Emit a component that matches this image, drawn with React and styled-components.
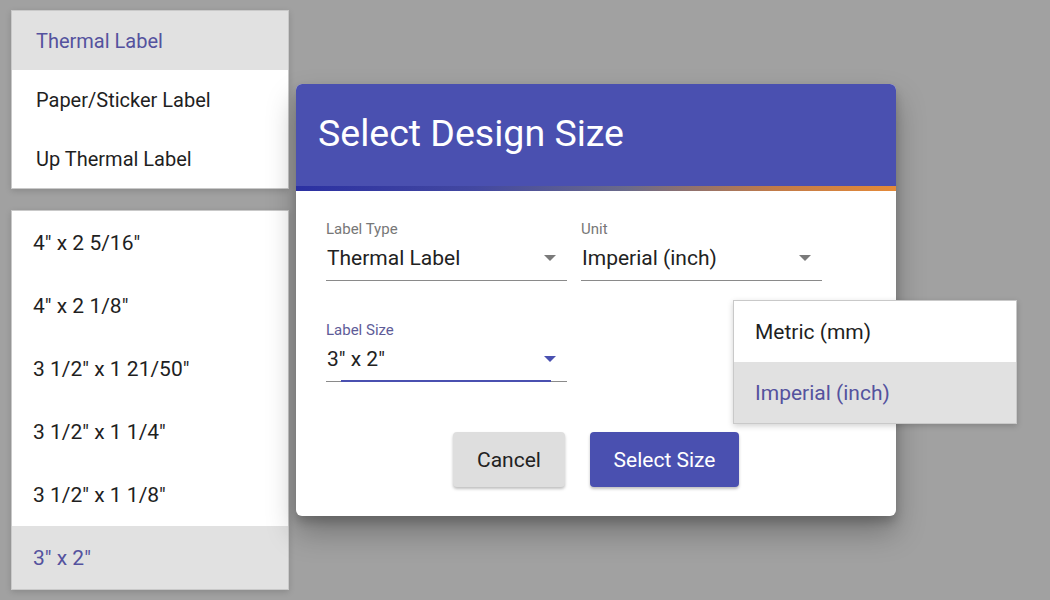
import React from 'react'
import styled, { createGlobalStyle } from 'styled-components'

const GlobalStyle = createGlobalStyle`
  html, body {
    margin: 0;
    padding: 0;
    background: #a1a1a1;
    font-family: Roboto, "Liberation Sans", Arial, sans-serif;
  }
`

const Backdrop = styled.div`
  width: 1050px;
  height: 600px;
  overflow: hidden;
  background: #a1a1a1;
  display: flex;
  align-items: flex-start;
  padding: 10px 0 0 11px;
  box-sizing: border-box;
`

const MenuColumn = styled.div`
  display: flex;
  flex-direction: column;
  gap: 21px;
  width: 278px;
  flex-shrink: 0;
`

const Menu = styled.ul`
  list-style: none;
  margin: 0;
  padding: 0;
  background: #fff;
  border: 1px solid #c9c9c9;
  box-shadow: 0 2px 6px rgba(0, 0, 0, 0.15);
  width: ${props => props.width || '278px'};
  box-sizing: border-box;
`

const MenuItem = styled.li`
  height: ${props => props.h}px;
  display: flex;
  align-items: center;
  padding-left: ${props => props.pad}px;
  font-size: ${props => props.size || 21}px;
  color: ${props => (props.selected ? '#54529e' : '#1f1f1f')};
  background: ${props => (props.selected ? '#e1e1e1' : '#fff')};
`

const Dialog = styled.div`
  width: 600px;
  margin: 74px 0 0 7px;
  background: #fff;
  border-radius: 6px;
  position: relative;
  box-shadow: 0 16px 30px rgba(0, 0, 0, 0.28), 0 6px 10px rgba(0, 0, 0, 0.18);
`

const Header = styled.div`
  background: #4a50b0;
  border-radius: 6px 6px 0 0;
  height: 102px;
  display: flex;
  align-items: center;
  padding-left: 22px;
  color: #fff;
  font-size: 37.5px;
  padding-bottom: 4px;
  box-sizing: border-box;
`

const Stripe = styled.div`
  height: 5px;
  background: linear-gradient(90deg, #2b30a2 0%, #4348a0 30%, #6a6a8a 55%, #c27b48 80%, #e58a38 100%);
`

const Body = styled.div`
  padding: 30px 30px 29px 30px;
`

const FieldRow = styled.div`
  display: flex;
  gap: 14px;
  margin-bottom: ${props => props.mb || 0}px;
`

const Field = styled.div`
  width: 241px;
  position: relative;
`

const FieldLabel = styled.div`
  font-size: 15px;
  line-height: 16px;
  color: ${props => (props.focused ? '#5e5c98' : '#777')};
`

const ValueLine = styled.div`
  display: flex;
  align-items: center;
  justify-content: space-between;
  height: 28px;
  margin-top: 7px;
  padding: 0 11px 8px 1px;
  font-size: 21px;
  color: #222;
  border-bottom: 1px solid #8a8a8a;
  position: relative;
`

const FocusBar = styled.div`
  position: absolute;
  left: 15px;
  right: 16px;
  bottom: -1px;
  height: 2px;
  background: #4a50b0;
`

const Caret = styled.span`
  width: 0;
  height: 0;
  border-left: 6px solid transparent;
  border-right: 6px solid transparent;
  border-top: 6px solid ${props => (props.focused ? '#4a50b0' : '#7a7a7a')};
`

const Actions = styled.div`
  display: flex;
  justify-content: center;
  gap: 25px;
`

const Button = styled.button`
  height: 55px;
  width: ${props => props.w}px;
  border: none;
  border-radius: 4px;
  font-family: inherit;
  font-size: 21px;
  color: ${props => (props.primary ? '#fff' : '#222')};
  background: ${props => (props.primary ? '#4a50b0' : '#dedede')};
  box-shadow: 0 2px 3px rgba(0, 0, 0, 0.25);
`

const UnitMenu = styled(Menu)`
  position: absolute;
  left: 437px;
  top: 216px;
  box-shadow: 0 2px 6px rgba(0, 0, 0, 0.18);
`

const labelTypes = ['Thermal Label', 'Paper/Sticker Label', 'Up Thermal Label']
const sizes = ['4" x 2 5/16"', '4" x 2 1/8"', '3 1/2" x 1 21/50"', '3 1/2" x 1 1/4"', '3 1/2" x 1 1/8"', '3" x 2"']
const units = ['Metric (mm)', 'Imperial (inch)']

const App = () => {
  return (
    <>
      <GlobalStyle />
      <Backdrop>
        <MenuColumn>
          <Menu>
            {labelTypes.map((t, i) => (
              <MenuItem key={t} h={59} pad={24} size={20} selected={i === 0}>
                {t}
              </MenuItem>
            ))}
          </Menu>
          <Menu>
            {sizes.map((s, i) => (
              <MenuItem key={s} h={63} pad={21} selected={i === sizes.length - 1}>
                {s}
              </MenuItem>
            ))}
          </Menu>
        </MenuColumn>

        <Dialog>
          <Header>Select Design Size</Header>
          <Stripe />
          <Body>
            <FieldRow mb={41}>
              <Field>
                <FieldLabel>Label Type</FieldLabel>
                <ValueLine>
                  Thermal Label
                  <Caret />
                </ValueLine>
              </Field>
              <Field>
                <FieldLabel>Unit</FieldLabel>
                <ValueLine>
                  Imperial (inch)
                  <Caret />
                </ValueLine>
              </Field>
            </FieldRow>
            <FieldRow mb={50}>
              <Field>
                <FieldLabel focused>Label Size</FieldLabel>
                <ValueLine>
                  3" x 2"
                  <Caret focused />
                  <FocusBar />
                </ValueLine>
              </Field>
            </FieldRow>
            <Actions>
              <Button w={112}>Cancel</Button>
              <Button w={149} primary>Select Size</Button>
            </Actions>
          </Body>

          <UnitMenu width="284px">
            {units.map((u, i) => (
              <MenuItem key={u} h={61} pad={21} selected={i === 1}>
                {u}
              </MenuItem>
            ))}
          </UnitMenu>
        </Dialog>
      </Backdrop>
    </>
  )
}

export default App
